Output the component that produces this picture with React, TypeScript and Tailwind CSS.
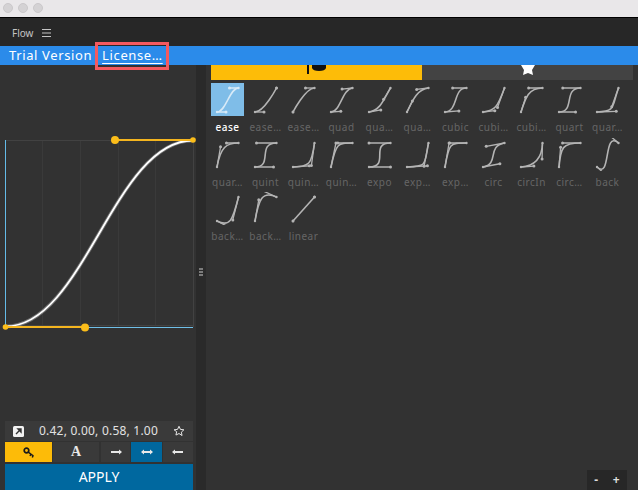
const presets: [string, number, number, number, number][] = [
  ["ease", 0.42, 0, 0.58, 1],
  ["ease…", 0.42, 0, 1, 1],
  ["ease…", 0, 0, 0.58, 1],
  ["quad", 0.455, 0.03, 0.515, 0.955],
  ["qua…", 0.55, 0.085, 0.68, 0.53],
  ["qua…", 0.25, 0.46, 0.45, 0.94],
  ["cubic", 0.645, 0.045, 0.355, 1],
  ["cubi…", 0.55, 0.055, 0.675, 0.19],
  ["cubi…", 0.215, 0.61, 0.355, 1],
  ["quart", 0.77, 0, 0.175, 1],
  ["quar…", 0.895, 0.03, 0.685, 0.22],
  ["quar…", 0.165, 0.84, 0.44, 1],
  ["quint", 0.86, 0, 0.07, 1],
  ["quin…", 0.755, 0.05, 0.855, 0.06],
  ["quin…", 0.23, 1, 0.32, 1],
  ["expo", 1, 0, 0, 1],
  ["exp…", 0.95, 0.05, 0.795, 0.035],
  ["exp…", 0.19, 1, 0.22, 1],
  ["circ", 0.785, 0.135, 0.15, 0.86],
  ["circIn", 0.6, 0.04, 0.98, 0.335],
  ["circ…", 0.075, 0.82, 0.165, 1],
  ["back", 0.68, -0.55, 0.265, 1.55],
  ["back…", 0.6, -0.28, 0.735, 0.045],
  ["back…", 0.175, 0.885, 0.32, 1.275],
  ["linear", 0, 0, 1, 1],
];

function Thumb({ a, b, c, d, active }: { a: number; b: number; c: number; d: number; active: boolean }) {
  const X = (v: number) => 6 + 21.5 * v;
  const Y = (v: number) => 29 - 24 * v;
  const stroke = active ? "#d8eaf7" : "#b4b4b4";
  return (
    <svg width="33" height="33" viewBox="0 0 33 33" className={active ? "bg-[#7fbde8] block" : "block"}>
      <path d={`M${X(0)} ${Y(0)}L${X(a)} ${Y(b)}M${X(1)} ${Y(1)}L${X(c)} ${Y(d)}`} stroke={stroke} strokeWidth="1.300" fill="none" />
      <path d={`M${X(0)} ${Y(0)}C${X(a)} ${Y(b)} ${X(c)} ${Y(d)} ${X(1)} ${Y(1)}`} stroke={stroke} strokeWidth="1.600" fill="none" />
      <circle cx={X(a)} cy={Y(b)} r="1.500" fill={stroke} />
      <circle cx={X(c)} cy={Y(d)} r="1.500" fill={stroke} />
      <circle cx={X(0)} cy={Y(0)} r="1.200" fill={stroke} />
      <circle cx={X(1)} cy={Y(1)} r="1.200" fill={stroke} />
    </svg>
  );
}

function Arrow({ left, right }: { left: boolean; right: boolean }) {
  return (
    <svg width="12" height="8" viewBox="0 0 12 8">
      <rect x="1" y="3" width="10" height="2" fill="#e8e8e8" />
      {left && <path d="M0 4L3 1.5V6.5Z" fill="#e8e8e8" />}
      {right && <path d="M12 4L9 1.5V6.5Z" fill="#e8e8e8" />}
    </svg>
  );
}

export default function App() {
  return (
    <div className="relative w-[638px] h-[490px] overflow-hidden flex flex-col bg-[#323232] font-['Noto_Sans','Liberation_Sans',sans-serif]">
      <div className="h-[18px] shrink-0 bg-[#e9e7e9] border-b border-black flex items-center gap-[5px] pl-[3px] pb-[1px]">
        <span className="w-[8px] h-[8px] rounded-full bg-[#d4d2d4] box-content border border-[#cac8ca]" />
        <span className="w-[8px] h-[8px] rounded-full bg-[#d4d2d4] box-content border border-[#cac8ca]" />
        <span className="w-[8px] h-[8px] rounded-full bg-[#d4d2d4] box-content border border-[#cac8ca]" />
      </div>

      <div className="h-[28px] shrink-0 bg-[#272727] flex items-center pl-[12px] gap-[9px] pt-[2px]">
        <span className="text-[10px] leading-none text-[#c4c4c4]">Flow</span>
        <svg width="9" height="8" viewBox="0 0 9 8">
          <path d="M0 .5H9M0 4H9M0 7.5H9" stroke="#c4c4c4" strokeWidth="1" />
        </svg>
      </div>

      <div className="relative h-[19px] shrink-0 bg-[#2b8bea] flex items-center pl-[9px] text-[13px] leading-none tracking-[0.62px] text-white">
        <span>Trial Version</span>
        <span className="ml-[10px] underline underline-offset-[3px]">License…</span>
        <div className="absolute left-[95px] top-[-4px] w-[74px] h-[28px] border-[3px] border-[#f4595f]" />
      </div>

      <div className="flex-1 min-h-0 flex">
        <aside className="w-[196px] shrink-0 flex flex-col">
          <svg width="196" height="356" viewBox="0 65 196 356" className="block shrink-0 overflow-visible">
            <path d="M42.5 140V325M80.500 140V325M118.500 140V325M155.500 140V325" stroke="#3a3a3a" strokeWidth="1" />
            <path d="M5.500 140.500H115M5 325.500H193M193.500 140V327" stroke="#424242" strokeWidth="1" />
            <path d="M5.500 140V326" stroke="#64bbe8" strokeWidth="1" />
            <path d="M85 327.500H193" stroke="#6fbfe8" strokeWidth="1" />
            <path d="M5.500 326.500C84 326.500 114 140.500 193 140.500" stroke="#ffffff" strokeOpacity="0.3" strokeWidth="3.600" fill="none" />
            <path d="M5.500 326.500C84 326.500 114 140.500 193 140.500" stroke="#ffffff" strokeWidth="1.800" fill="none" />
            <path d="M5.500 327H85M115 140H193" stroke="#f4b51f" strokeWidth="2" fill="none" />
            <circle cx="115" cy="140" r="4" fill="#fbbd1a" />
            <circle cx="85" cy="327.500" r="4" fill="#fbbd1a" />
            <circle cx="193" cy="140" r="2.800" fill="#fbbd1a" />
            <circle cx="5.500" cy="327" r="2.800" fill="#fbbd1a" />
          </svg>
          <div className="ml-[5px] w-[188px] h-[20px] shrink-0 bg-[#3a3a3a] flex items-center pl-[8px] pr-[8px] text-[12px] leading-none tracking-[0.22px] text-[#e2e2e2]">
            <svg width="11" height="11" viewBox="0 0 11 11" className="shrink-0">
              <rect width="11" height="11" rx="1.500" fill="#f2f2f2" />
              <path d="M3 8L7.500 3.500M5 3H8V6Z" stroke="#333333" strokeWidth="1.400" fill="#333333" />
            </svg>
            <span className="flex-1 text-center">0.42, 0.00, 0.58, 1.00</span>
            <svg width="12" height="12" viewBox="0 0 24 24" className="shrink-0" fill="none" stroke="#e6e6e6" strokeWidth="2">
              <path d="M12 2.500l2.900 6.300 6.900.8-5.100 4.700 1.400 6.800L12 17l-6.100 3.100 1.400-6.800L2.200 9.600l6.900-.8z" />
            </svg>
          </div>
          <div className="ml-[5px] w-[188px] mt-[1px] h-[20px] shrink-0 flex">
            <div className="w-[47px] bg-[#fdbb08] flex items-center justify-center">
              <svg width="12" height="11" viewBox="0 0 12 11" fill="none" stroke="#1a1a1a">
                <circle cx="3.500" cy="3.500" r="2.300" strokeWidth="1.700" />
                <path d="M5.200 5.200L10.500 9M8 7.200L7 9M10 8.700L9.300 10.500" strokeWidth="1.500" />
              </svg>
            </div>
            <div className="ml-[1px] w-[46px] bg-[#3a3a3a] flex items-center justify-center font-['Liberation_Serif',serif] font-bold text-[14px] leading-none text-[#e8e8e8]">A</div>
            <div className="ml-[2px] w-[29px] bg-[#3a3a3a] flex items-center justify-center"><Arrow left={false} right /></div>
            <div className="ml-[1px] w-[31px] bg-[#00679d] flex items-center justify-center"><Arrow left right /></div>
            <div className="ml-[1px] w-[30px] bg-[#3a3a3a] flex items-center justify-center"><Arrow left right={false} /></div>
          </div>
          <div className="ml-[5px] w-[188px] mt-[2px] flex-1 bg-[#00689f] flex items-center justify-center text-[14px] leading-none text-white">APPLY</div>
        </aside>

        <div className="w-[10px] shrink-0 bg-[#2a2a2a] flex flex-col items-center justify-center gap-[1.500px] pb-[11px]">
          <span className="h-[1.500px] w-[4px] bg-[#7c7c7c]" />
          <span className="h-[1.500px] w-[4px] bg-[#7c7c7c]" />
          <span className="h-[1.500px] w-[4px] bg-[#7c7c7c]" />
        </div>

        <main className="relative flex-1 min-w-0 pl-[5px] pr-[5px]">
          <div className="flex h-[15px]">
            <div className="w-[211px] bg-[#fdbc08] flex justify-center overflow-hidden">
              <svg width="19" height="9" viewBox="0 0 19 9" fill="#111111">
                <rect x="0" y="0" width="2" height="9" />
                <path d="M5 0H19V3Q18 6 12 6Q6 6 5 3Z" />
              </svg>
            </div>
            <div className="flex-1 bg-[#434343] flex justify-center overflow-hidden">
              <svg width="14" height="10" viewBox="0 0 14 10" fill="#ffffff">
                <path d="M0 0H14L11 5L12 10L7 8L2 10L3 5Z" />
              </svg>
            </div>
          </div>
          <div className="mt-[3px] grid grid-cols-[repeat(11,38px)] auto-rows-[54.5px]">
            {presets.map(([name, a, b, c, d], i) => (
              <div key={i} className="w-[33px] flex flex-col items-center">
                <Thumb a={a} b={b} c={c} d={d} active={i === 0} />
                <span className={"mt-[4px] w-[38px] text-center text-[10px] leading-[14px] tracking-[0.5px] whitespace-nowrap " + (i === 0 ? "text-white font-medium" : "text-[#666666]")}>{name}</span>
              </div>
            ))}
          </div>
          <div className="absolute right-[11px] bottom-0 w-[40px] h-[20px] bg-[#272727] flex items-center justify-around text-[12px] leading-none text-[#dddddd] font-bold">
            <span>-</span>
            <span>+</span>
          </div>
        </main>
      </div>
    </div>
  );
}
